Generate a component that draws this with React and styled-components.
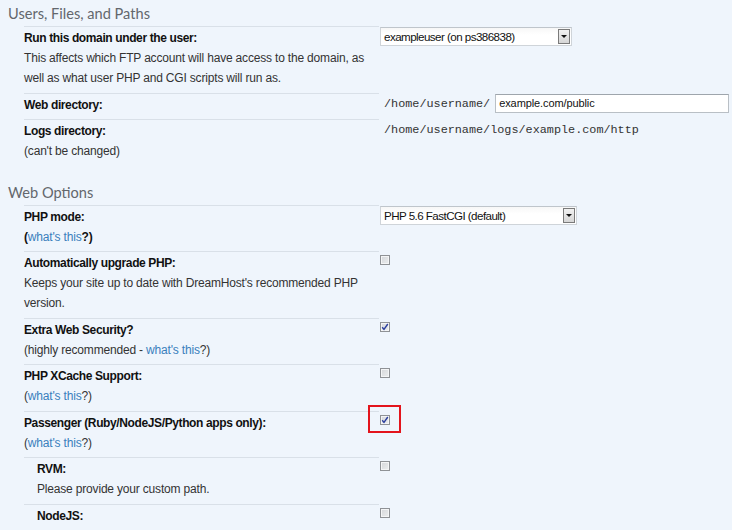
import React from "react";
import styled, { createGlobalStyle, css } from "styled-components";

const GlobalStyle = createGlobalStyle`
  html, body {
    margin: 0;
    padding: 0;
    background: #eff5fc;
  }
  body {
    font-family: "Liberation Sans", Arial, sans-serif;
    font-size: 12px;
    color: #222;
  }
`;

const App = () => {
  return (
    <>
      <GlobalStyle />
      <Page>
        <Section>
          <Heading>Users, Files, and Paths</Heading>
          <Rows>
            <Row>
              <Label>
                <Title>Run this domain under the user:</Title>
                <Desc>
                  This affects which FTP account will have access to the domain, as
                  well as what user PHP and CGI scripts will run as.
                </Desc>
              </Label>
              <Value>
                <Select width={192}>
                  <SelectText>exampleuser (on ps386838)</SelectText>
                  <SelectArrow />
                </Select>
              </Value>
            </Row>
            <Row>
              <Label>
                <Title>Web directory:</Title>
              </Label>
              <Value>
                <Mono>/home/username/</Mono>
                <TextInput defaultValue="example.com/public" />
              </Value>
            </Row>
            <Row>
              <Label>
                <Title>Logs directory:</Title>
                <Desc>(can't be changed)</Desc>
              </Label>
              <Value>
                <Mono>/home/username/logs/example.com/http</Mono>
              </Value>
            </Row>
          </Rows>
        </Section>

        <Section spaced>
          <Heading>Web Options</Heading>
          <Rows>
            <Row>
              <Label>
                <Title>PHP mode:</Title>
                <Desc>
                  <b>(</b><Link>what's this</Link><b>?)</b>
                </Desc>
              </Label>
              <Value>
                <Select width={197}>
                  <SelectText>PHP 5.6 FastCGI (default)</SelectText>
                  <SelectArrow />
                </Select>
              </Value>
            </Row>
            <Row>
              <Label>
                <Title>Automatically upgrade PHP:</Title>
                <Desc>
                  Keeps your site up to date with DreamHost's recommended PHP
                  version.
                </Desc>
              </Label>
              <Value>
                <CheckBox />
              </Value>
            </Row>
            <Row>
              <Label>
                <Title>Extra Web Security?</Title>
                <Desc>
                  (highly recommended - <Link>what's this</Link>?)
                </Desc>
              </Label>
              <Value>
                <CheckBox checked />
              </Value>
            </Row>
            <Row>
              <Label>
                <Title>PHP XCache Support:</Title>
                <Desc>
                  (<Link>what's this</Link>?)
                </Desc>
              </Label>
              <Value>
                <CheckBox />
              </Value>
            </Row>
            <Row>
              <Label>
                <Title>Passenger (Ruby/NodeJS/Python apps only):</Title>
                <Desc>
                  (<Link>what's this</Link>?)
                </Desc>
              </Label>
              <Value>
                <CheckBox checked highlight />
              </Value>
            </Row>
            <Row>
              <Label nested>
                <Title>RVM:</Title>
                <Desc>Please provide your custom path.</Desc>
              </Label>
              <Value>
                <CheckBox />
              </Value>
            </Row>
            <Row>
              <Label nested>
                <Title>NodeJS:</Title>
              </Label>
              <Value>
                <CheckBox />
              </Value>
            </Row>
          </Rows>
        </Section>
      </Page>
    </>
  );
};

const CheckBox = ({ checked, highlight }) => (
  <BoxWrap highlight={highlight}>
    <Box>
      {checked && (
        <svg width="8" height="8" viewBox="0 0 8 8">
          <path d="M1.2 4.2 L3 6.4 L6.8 1" fill="none" stroke="#2a3e9e" strokeWidth="1.4" />
        </svg>
      )}
    </Box>
  </BoxWrap>
);

// Styled Components
const Page = styled.div`
  padding: 0 8px 20px;
  border-left: 2px solid #f7fafd;
  min-height: 530px;
  box-sizing: border-box;
  margin-left: -2px;
`;

const Section = styled.section`
  margin-top: ${(p) => (p.spaced ? "13px" : "0")};
`;

const Heading = styled.h2`
  margin: 0;
  height: 26px;
  padding-top: 2px;
  box-sizing: border-box;
  line-height: 24px;
  font-family: Lato, "Open Sans", sans-serif;
  font-weight: 400;
  font-size: 14.6px;
  color: #63676c;
`;

const Rows = styled.div`
  padding-left: 16px;
`;

const Row = styled.div`
  display: grid;
  grid-template-columns: 355px 1fr;
  column-gap: 1px;
`;

const Label = styled.div`
  border-top: 1px solid #d9e0e8;
  padding: 1px 0 4.5px ${(p) => (p.nested ? "13px" : "0")};
`;

const Title = styled.div`
  font-weight: bold;
  font-size: 12px;
  letter-spacing: -0.38px;
  line-height: 20px;
  color: #111;
`;

const Desc = styled.div`
  line-height: 20px;
  letter-spacing: -0.18px;
  color: #333;

  b {
    color: #111;
  }
`;

const Link = styled.a`
  color: #3a80bd;
  text-decoration: none;
  cursor: pointer;
`;

const Value = styled.div`
  display: flex;
  align-items: flex-start;
  gap: 5px;
  padding-top: 1px;
`;

const Select = styled.div`
  width: ${(p) => p.width}px;
  height: 19px;
  box-sizing: border-box;
  display: flex;
  align-items: center;
  justify-content: space-between;
  border: 1px solid #cfd4d9;
  border-top-color: #bfc5cb;
  background: linear-gradient(#f7f7f7, #ffffff 40%);
  padding: 0 0 0 3px;
`;

const SelectText = styled.span`
  font-size: 11.6px;
  letter-spacing: -0.55px;
  color: #111;
`;

const SelectArrow = styled.span`
  width: 12px;
  height: 15px;
  box-sizing: border-box;
  border: 1px solid #7a7a7a;
  background: linear-gradient(#f1f1f1, #d6d6d6);
  display: flex;
  align-items: center;
  justify-content: center;
  margin-right: 1px;

  &::after {
    content: "";
    border-left: 3px solid transparent;
    border-right: 3px solid transparent;
    border-top: 3px solid #111;
  }
`;

const Mono = styled.span`
  font-family: "Liberation Mono", "Courier New", monospace;
  font-size: 11.8px;
  line-height: 20px;
  color: #333;
  padding-left: 4px;
`;

const TextInput = styled.input`
  width: 234px;
  height: 19px;
  box-sizing: border-box;
  border: 1px solid #b9bfc5;
  border-top-color: #9ea5ac;
  background: #fff;
  font-family: "Liberation Sans", Arial, sans-serif;
  font-size: 11px;
  letter-spacing: -0.1px;
  color: #111;
  padding: 0 3px;
  outline: none;
`;

const BoxWrap = styled.span`
  position: relative;
  display: inline-block;
  margin-top: 3px;

  ${(p) =>
    p.highlight &&
    css`
      &::after {
        content: "";
        position: absolute;
        left: -12px;
        top: -10px;
        width: 33px;
        height: 28px;
        box-sizing: border-box;
        border: 2px solid #e3141c;
      }
    `}
`;

const Box = styled.span`
  display: flex;
  align-items: center;
  justify-content: center;
  width: 10px;
  height: 10px;
  box-sizing: border-box;
  border: 1px solid #8f9296;
  background: linear-gradient(135deg, #d5d7da, #eceeef);
  box-shadow: inset 0 0 0 1px #f4f5f6;
`;

export default App;
